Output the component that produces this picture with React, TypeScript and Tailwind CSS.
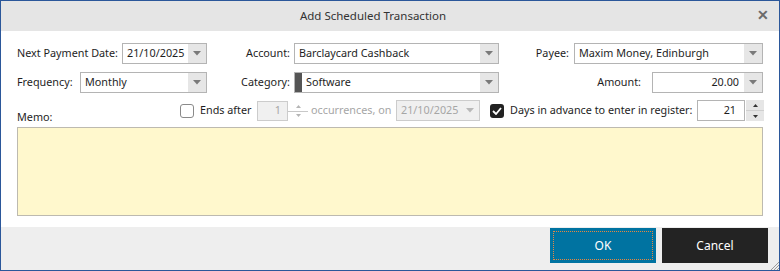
import React from 'react';

const font = { fontFamily: '"Noto Sans", "Open Sans", sans-serif' };

function Arrow({ muted = false }: { muted?: boolean }) {
  return (
    <svg width="8" height="5" viewBox="0 0 8 5">
      <path d="M0 0 L8 0 L4 4.5 Z" fill={muted ? '#b8b8b8' : '#7a7a7a'} />
    </svg>
  );
}

function Combo({ w, text, right = false, bar = false, disabled = false }: { w: string; text: string; right?: boolean; bar?: boolean; disabled?: boolean }) {
  return (
    <div className={`${w} shrink-0 h-[21px] flex border ${disabled ? 'border-[#cccccc] bg-[#f0f0f0] text-[#a6a6a6]' : 'border-[#b4b4b4] bg-white text-[#1e1e1e]'}`}>
      {bar && <div className="w-[7px] bg-[#555555]" />}
      <div className={`flex-1 flex items-center whitespace-nowrap leading-none ${right ? 'justify-end pr-[5px]' : 'pl-[4px]'}`}>{text}</div>
      <div className={`w-[18px] flex items-center justify-center ${disabled ? '' : 'bg-[#e6e6e6]'}`}>
        <Arrow muted={disabled} />
      </div>
    </div>
  );
}

export default function App() {
  return (
    <div style={font} className="w-[780px] h-[271px] border border-[#2b579a] flex flex-col text-[10.8px] text-[#1e1e1e] bg-white overflow-hidden whitespace-nowrap">
      <div className="h-[30px] bg-[#e5e5e5] flex items-center relative shrink-0">
        <div className="flex-1 text-center text-[11.5px] text-[#333] pr-[34px]">Add Scheduled Transaction</div>
        <div className="absolute right-[10px] top-[7px] text-[#6b6b6b] font-bold text-[14px] leading-none">✕</div>
      </div>

      <div className="flex flex-col px-[16px] pt-[12px]">
        <div className="flex items-center h-[21px]">
          <div className="w-[105px] shrink-0">Next Payment Date:</div>
          <Combo w="w-[85px]" text="21/10/2025" />
          <div className="w-[87px] shrink-0 text-right pr-[4px]">Account:</div>
          <Combo w="w-[205px]" text="Barclaycard Cashback" />
          <div className="w-[75px] shrink-0 text-right pr-[5px]">Payee:</div>
          <Combo w="w-[189px]" text="Maxim Money, Edinburgh" />
        </div>

        <div className="flex items-center h-[21px] mt-[8px]">
          <div className="w-[63px] shrink-0">Frequency:</div>
          <Combo w="w-[127px]" text="Monthly" />
          <div className="w-[87px] shrink-0 text-right pr-[4px]">Category:</div>
          <Combo w="w-[205px]" text="Software" bar />
          <div className="w-[153px] shrink-0 text-right pr-[11px]">Amount:</div>
          <Combo w="w-[111px]" text="20.00" right />
        </div>

        <div className="flex items-center h-[21px] mt-[7px]">
          <div className="w-[163px] shrink-0 self-end translate-y-[4px]">Memo:</div>
          <div className="w-[14px] h-[14px] shrink-0 rounded-[3px] border border-[#8a8a8a] bg-white" />
          <div className="ml-[6px] w-[57px] shrink-0">Ends after</div>
          <div className="w-[31px] h-[20px] shrink-0 border border-[#cccccc] bg-[#f0f0f0] text-[#a6a6a6] flex items-center justify-end pr-[6px]">1</div>
          <div className="w-[20px] h-[20px] shrink-0 flex flex-col items-center justify-center relative">
            <div className="absolute left-0 right-0 top-[10px] h-px bg-[#c8c8c8]" />
            <svg width="5" height="16" viewBox="0 0 5 16">
              <path d="M0 5 L5 5 L2.5 2 Z" fill="#b5b5b5" />
              <path d="M0 11 L5 11 L2.5 14 Z" fill="#b5b5b5" />
            </svg>
          </div>
          <div className="ml-[3px] w-[85px] shrink-0 text-[#a6a6a6]">occurrences, on</div>
          <Combo w="w-[84px]" text="21/10/2025" disabled />
          <div className="ml-[10px] w-[14px] h-[14px] shrink-0 rounded-[3px] bg-[#222222] flex items-center justify-center">
            <svg width="10" height="8" viewBox="0 0 10 8">
              <path d="M1 4 L4 7 L9 1" stroke="white" strokeWidth="1.8" fill="none" />
            </svg>
          </div>
          <div className="ml-[6px] w-[187px] shrink-0">Days in advance to enter in register:</div>
          <div className="w-[48px] h-[21px] shrink-0 border border-[#b4b4b4] flex items-center justify-end pr-[8px]">21</div>
          <div className="w-[18px] h-[21px] ml-[1px] shrink-0 flex flex-col">
            <div className="flex-1 bg-[#e6e6e6] flex items-center justify-center border-b border-[#cfcfcf]">
              <svg width="5" height="3" viewBox="0 0 5 3"><path d="M0 3 L5 3 L2.5 0 Z" fill="#333" /></svg>
            </div>
            <div className="flex-1 bg-[#e6e6e6] flex items-center justify-center">
              <svg width="5" height="3" viewBox="0 0 5 3"><path d="M0 0 L5 0 L2.5 3 Z" fill="#333" /></svg>
            </div>
          </div>
        </div>

        <div className="mt-[6px] h-[89px] bg-[#fff8cd] border border-[#bdbab0]" />
      </div>

      <div className="mt-[11px] flex-1 bg-[#eeeeee] flex justify-end gap-[6px] pt-[1px] pr-[11px] relative">
        <button className="w-[106px] h-[35px] bg-[#0073a1] text-white text-[12px] outline outline-1 outline-dotted outline-[#e8873e] outline-offset-[-4px]">OK</button>
        <button className="w-[106px] h-[35px] bg-[#232323] text-white text-[12px]">Cancel</button>
        <svg className="absolute right-0 bottom-0" width="9" height="9" viewBox="0 0 9 9">
          <path d="M9 1 L1 9 M9 4 L4 9 M9 7 L7 9" stroke="#9a9a9a" strokeWidth="1" />
        </svg>
      </div>
    </div>
  );
}
